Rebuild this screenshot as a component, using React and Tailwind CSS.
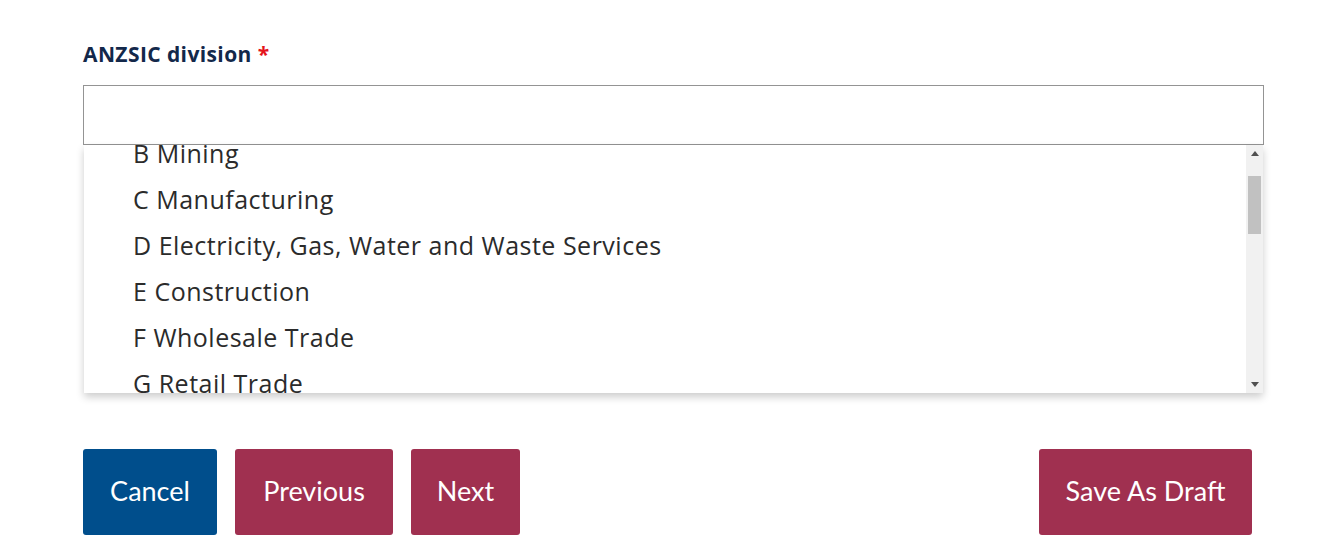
const divisions = [
  'B Mining',
  'C Manufacturing',
  'D Electricity, Gas, Water and Waste Services',
  'E Construction',
  'F Wholesale Trade',
  'G Retail Trade',
]

const Scrollbar = () => (
  <div className="w-[17px] shrink-0 bg-[#f1f1f1] flex flex-col items-center">
    <div className="h-[17px] flex items-center justify-center">
      <svg width="8" height="5" viewBox="0 0 8 5"><path d="M4 0 L8 5 L0 5 Z" fill="#505050" /></svg>
    </div>
    <div className="w-[13px] h-[58px] mt-[14px] bg-[#c1c1c1]" />
    <div className="flex-1" />
    <div className="h-[17px] flex items-center justify-center">
      <svg width="8" height="5" viewBox="0 0 8 5"><path d="M0 0 L8 0 L4 5 Z" fill="#505050" /></svg>
    </div>
  </div>
)

export default function App() {
  return (
    <div className="w-[1325px] h-[545px] bg-white pt-[40px] px-[83px] font-['Lato',sans-serif]">
      <label className="block text-[21px] font-bold text-[#13284a] leading-[28px] font-['Open_Sans',sans-serif] tracking-[0.4px]">
        ANZSIC division <span className="text-[#e4141b]">*</span>
      </label>

      <div className="mt-[17px] w-[1181px] relative">
        <div className="h-[60px] border border-[#949494] bg-white" />
        <div className="absolute left-[1px] right-[1px] top-[60px] h-[248px] flex bg-white shadow-[0_4px_8px_rgba(0,0,0,0.2)]">
          <div className="flex-1 overflow-hidden">
            <ul className="mt-[-14px]">
              {divisions.map((d) => (
                <li key={d} className="h-[46px] flex items-center pl-[49px] text-[25px] text-[#2b2b2b] font-['Open_Sans',sans-serif] tracking-[0.5px]">
                  {d}
                </li>
              ))}
            </ul>
          </div>
          <Scrollbar />
        </div>
      </div>

      <div className="mt-[304px] w-[1169px] flex items-start">
        <div className="flex gap-[18px]">
          <button className="h-[86px] w-[134px] pb-[2px] rounded-[3px] bg-[#004e8c] text-white text-[27px]">Cancel</button>
          <button className="h-[86px] w-[158px] pb-[2px] rounded-[3px] bg-[#a03050] text-white text-[27px]">Previous</button>
          <button className="h-[86px] w-[109px] pb-[2px] rounded-[3px] bg-[#a03050] text-white text-[27px]">Next</button>
        </div>
        <div className="flex-1" />
        <button className="h-[86px] w-[213px] pb-[2px] rounded-[3px] bg-[#a03050] text-white text-[27px]">Save As Draft</button>
      </div>
    </div>
  )
}
